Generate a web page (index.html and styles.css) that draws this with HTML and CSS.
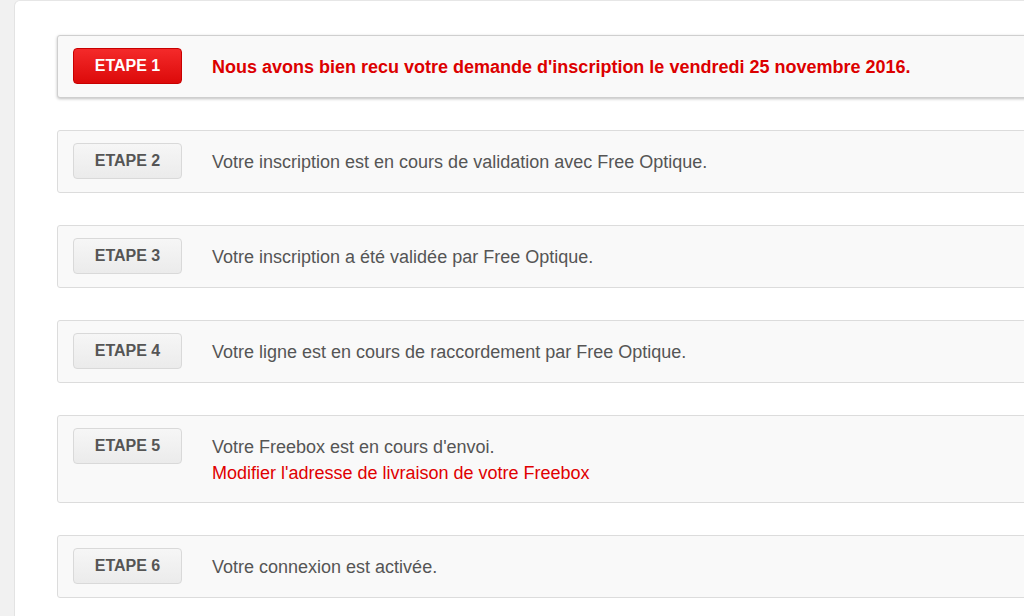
FILE: index.html
```html
<!DOCTYPE html>
<html lang="fr">
<head>
<meta charset="utf-8">
<title>Suivi de votre inscription</title>
<link rel="stylesheet" href="styles.css">
</head>
<body>
<div class="page">
  <div class="panel">
    <ul class="steps">
      <li class="step step-current">
        <span class="badge badge-red">ETAPE 1</span>
        <div class="step-text strong-red">Nous avons bien recu votre demande d'inscription le vendredi 25 novembre 2016.</div>
      </li>
      <li class="step">
        <span class="badge">ETAPE 2</span>
        <div class="step-text">Votre inscription est en cours de validation avec Free Optique.</div>
      </li>
      <li class="step">
        <span class="badge">ETAPE 3</span>
        <div class="step-text">Votre inscription a été validée par Free Optique.</div>
      </li>
      <li class="step">
        <span class="badge">ETAPE 4</span>
        <div class="step-text">Votre ligne est en cours de raccordement par Free Optique.</div>
      </li>
      <li class="step">
        <span class="badge">ETAPE 5</span>
        <div class="step-text">Votre Freebox est en cours d'envoi.<br><a class="link-red" href="#">Modifier l'adresse de livraison de votre Freebox</a></div>
      </li>
      <li class="step">
        <span class="badge">ETAPE 6</span>
        <div class="step-text">Votre connexion est activée.</div>
      </li>
    </ul>
  </div>
</div>
</body>
</html>
```
FILE: styles.css
```css
html, body {
  margin: 0;
  padding: 0;
}
body {
  background: #f1f1f1;
  overflow: hidden;
  font-family: "Liberation Sans", Arial, Helvetica, sans-serif;
  font-size: 18px;
  color: #555;
}
.page {
  padding-left: 14px;
}
.panel {
  width: 1100px;
  min-height: 640px;
  background: #fff;
  border-left: 1px solid #e3e3e3;
  border-top: 1px solid #e6e6e6;
  border-top-left-radius: 6px;
  padding: 34px 0 0 42px;
  box-sizing: border-box;
}
.steps {
  list-style: none;
  margin: 0;
  padding: 0;
  display: flex;
  flex-direction: column;
  gap: 32px;
}
.step {
  width: 1000px;
  box-sizing: border-box;
  display: flex;
  align-items: flex-start;
  gap: 30px;
  padding: 12px 15px 13px;
  background: #f9f9f9;
  border: 1px solid #dcdcdc;
  border-radius: 3px;
}
.step-current {
  border-color: #cfcfcf;
  box-shadow: 0 1px 3px rgba(0, 0, 0, 0.25);
}
.badge {
  flex: none;
  width: 109px;
  height: 36px;
  box-sizing: border-box;
  display: flex;
  align-items: center;
  justify-content: center;
  font-weight: bold;
  font-size: 16px;
  color: #555;
  background: linear-gradient(#f6f6f6, #ebebeb);
  border: 1px solid #d9d9d9;
  border-radius: 4px;
}
.badge-red {
  color: #fff;
  background: linear-gradient(#f42a2a, #dc0a0a);
  border-color: #c80000;
}
.step-text {
  padding: 6px 0 3px;
  line-height: 26px;
}
.strong-red {
  color: #dc0000;
  font-weight: bold;
}
.link-red {
  color: #e00000;
  text-decoration: none;
}
```
